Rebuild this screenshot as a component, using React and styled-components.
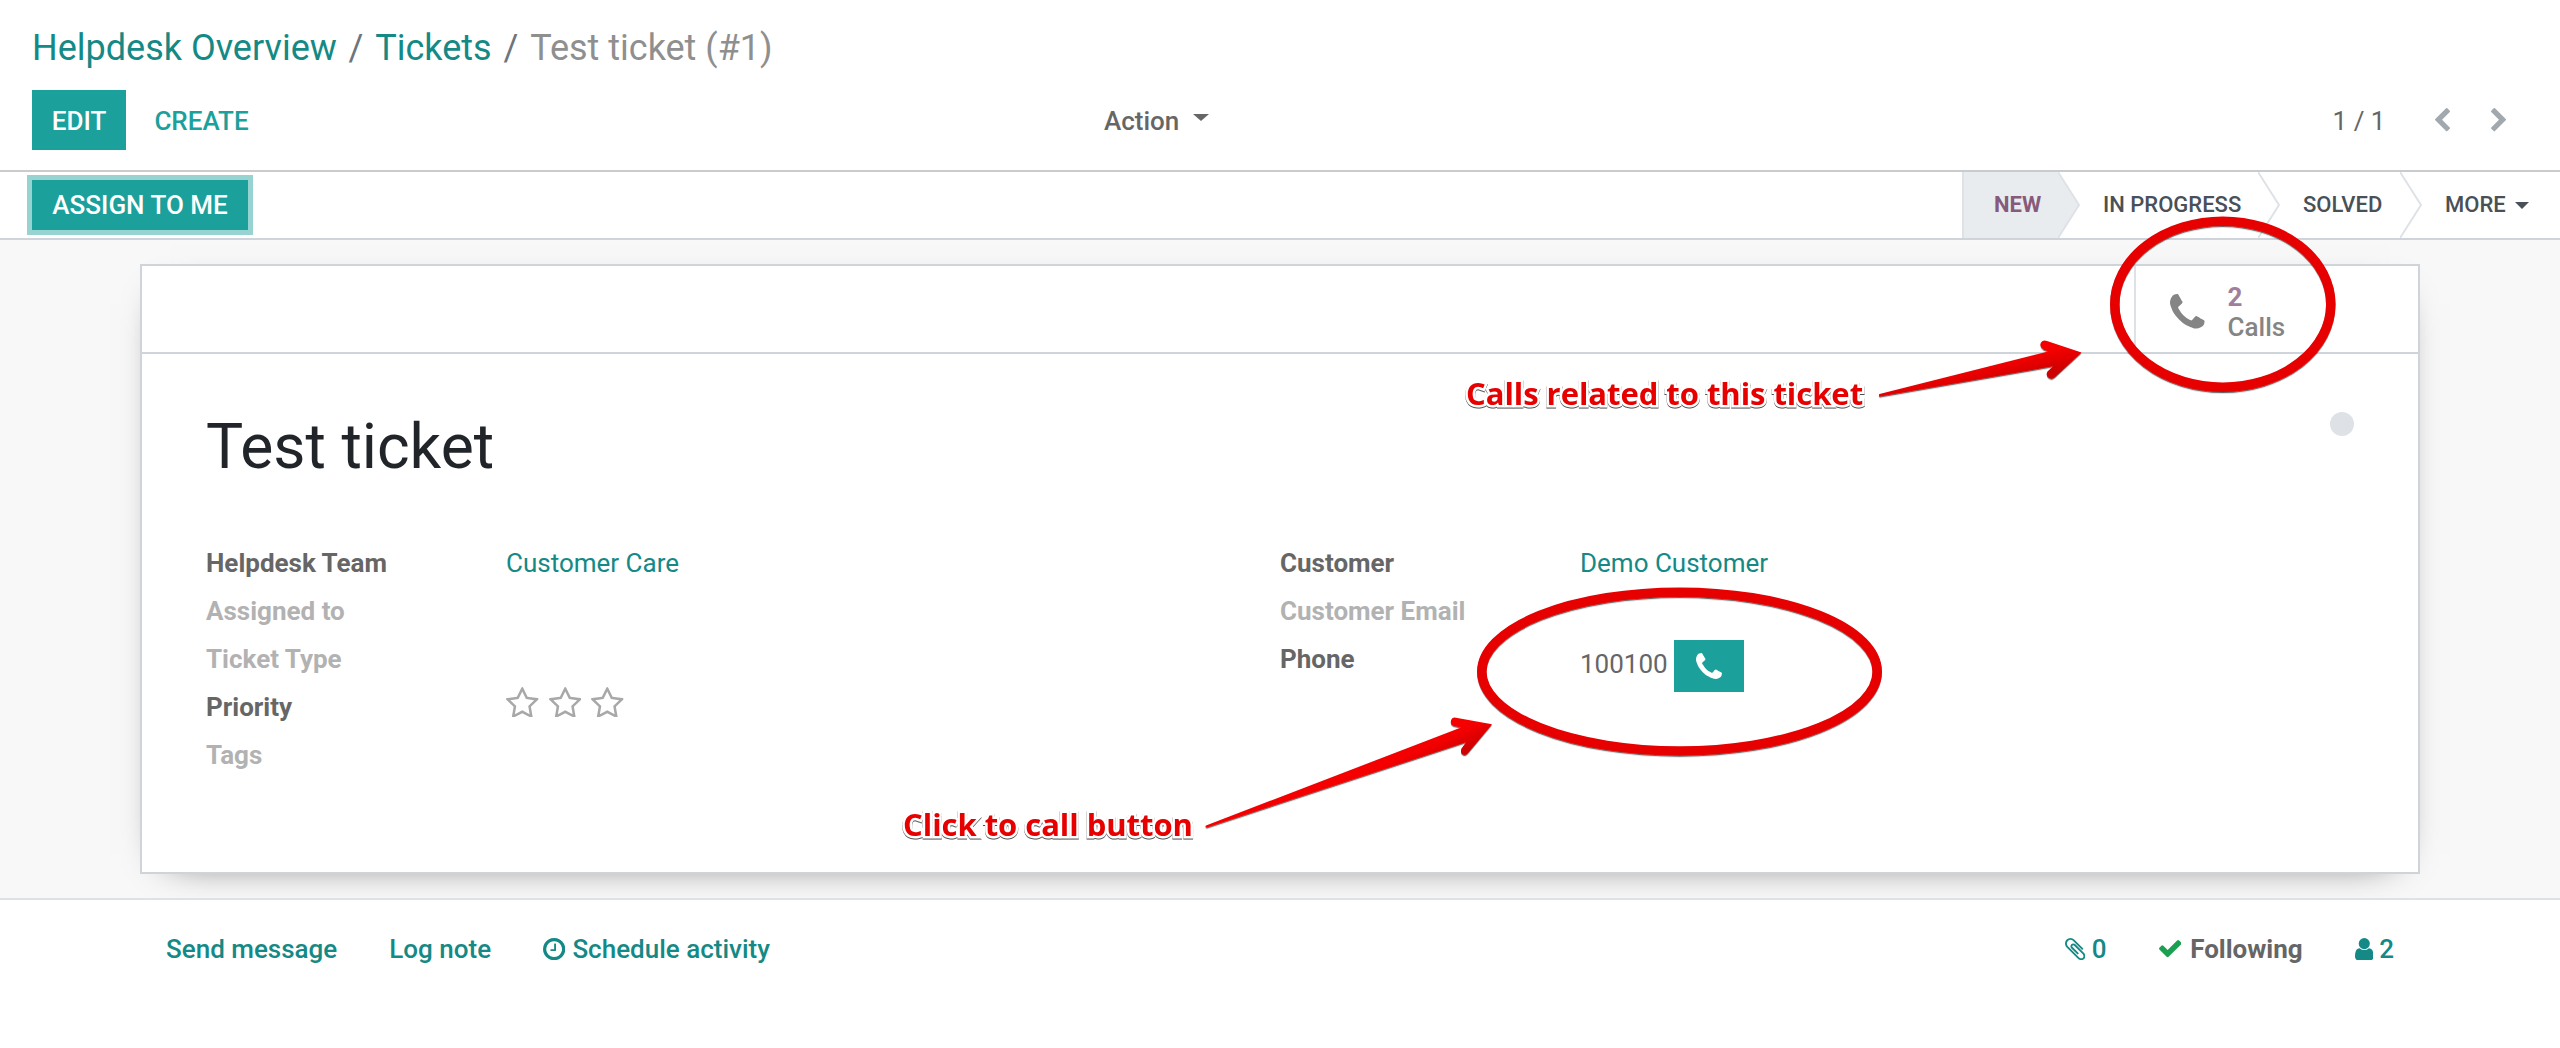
import React from "react";
import styled, { createGlobalStyle } from "styled-components";

const teal = "#1ba09c";
const link = "#148985";
const text = "#666666";
const rule = "#ced4da";

const GlobalStyle = createGlobalStyle`
  * { box-sizing: border-box; }
  body { margin: 0; background: #fff; }
`;

const Page = styled.div`
  position: relative;
  width: 2560px;
  height: 1048px;
  overflow: hidden;
  display: flex;
  flex-direction: column;
  background: #fff;
  color: ${text};
  font: 400 26px/40px Roboto, "Noto Sans", sans-serif;
`;

const ControlPanel = styled.header`
  height: 172px;
  padding: 22px 32px 0;
  border-bottom: 2px solid #c9cbcc;
`;

const Breadcrumb = styled.nav`
  display: flex;
  gap: 11.8px;
  height: 68px;
  font-size: 36px;
  line-height: 53px;
  color: #6c757d;
  white-space: nowrap;
`;

const Crumb = styled.span`
  color: ${(p) => (p.$current ? "#8f8f8f" : link)};
`;

const Controls = styled.div`
  display: grid;
  grid-template-columns: 1072px 1fr auto;
  align-items: center;
  height: 60px;
`;

const ButtonGroup = styled.div`
  display: flex;
`;

const Button = styled.button`
  width: ${(p) => p.$width}px;
  height: ${(p) => (p.$compact ? 50 : 60)}px;
  padding: ${(p) => (p.$compact ? 0 : 2)}px 0 0;
  border: 0;
  background: ${(p) => (p.$flat ? "transparent" : teal)};
  color: ${(p) => (p.$flat ? teal : "#fff")};
  box-shadow: ${(p) => (p.$focused ? "0 0 0 5px #97d3d1" : "none")};
  font: 500 26px/40px Roboto, sans-serif;
  text-transform: uppercase;
  white-space: nowrap;
`;

const Action = styled.div`
  display: flex;
  gap: 14px;
  padding-top: 2px;
  font-weight: 500;
`;

const Caret = styled.i`
  width: 0;
  height: 0;
  border: solid transparent;
  border-width: 7px ${(p) => p.$size}px 0;
  border-top-color: currentColor;
  margin-top: ${(p) => p.$top}px;
`;

const Pager = styled.div`
  display: flex;
  align-items: center;
  padding-right: 22px;
  color: #666;
`;

const PagerCount = styled.span`
  padding-top: 2px;
`;

const PagerArrows = styled.div`
  display: flex;
  gap: 40.5px;
  margin-left: 50px;
  color: #a1a8ae;
`;

const StatusBar = styled.div`
  display: flex;
  justify-content: space-between;
  align-items: center;
  height: 68px;
  padding-left: 32px;
  border-bottom: 2px solid ${rule};
`;

const Stages = styled.div`
  display: flex;
  height: 66px;
  padding-right: 32px;
  border-left: 2px solid #dee2e6;
  font-size: 22px;
  font-weight: 500;
  line-height: 66px;
  color: #495057;
  text-transform: uppercase;
  white-space: nowrap;
`;

const Stage = styled.div`
  display: flex;
  gap: 9px;
  width: ${(p) => p.$width}px;
  padding-left: ${(p) => (p.$active ? 30 : 23)}px;
  background: ${(p) => (p.$active ? "#e9ecef" : "transparent")};
  color: ${(p) => (p.$active ? "#875a7b" : "inherit")};
  font-weight: ${(p) => (p.$active ? 700 : 500)};
`;

const Body = styled.main`
  height: 660px;
  padding: 24px 140px 0;
  background: #f8f8f8;
  border-bottom: 2px solid #dee2e6;
  overflow: hidden;
`;

const Sheet = styled.section`
  height: 610px;
  border: 2px solid ${rule};
  background: #fff;
  box-shadow: 0 10px 40px -30px #000;
`;

const StatBar = styled.div`
  display: flex;
  justify-content: flex-end;
  height: 88px;
  border-bottom: 2px solid ${rule};
`;

const StatButton = styled.div`
  display: flex;
  align-items: center;
  width: 284px;
  padding: 5px 0 0 34px;
  border-left: 2px solid #dee2e6;
  color: #858585;
`;

const StatText = styled.div`
  display: flex;
  flex-direction: column;
  margin-left: 23px;
  font-weight: 500;
  line-height: 30px;
`;

const StatValue = styled.span`
  color: #a17f9b;
  font-weight: 700;
`;

const TitleRow = styled.div`
  display: flex;
  justify-content: space-between;
  padding: 51px 64px 0 64px;
  height: 184px;
`;

const Title = styled.h1`
  margin: 0;
  color: #212529;
  font-size: 62.4px;
  font-weight: 400;
  line-height: 84px;
`;

const KanbanState = styled.i`
  width: 24px;
  height: 24px;
  margin-top: 7px;
  border-radius: 50%;
  background: #dee2e6;
`;

const Fields = styled.div`
  display: grid;
  grid-template-columns: 1074px 1fr;
  padding-left: 64px;
`;

const Field = styled.div`
  display: grid;
  grid-template-columns: 300px 1fr;
  height: 48px;
`;

const Label = styled.label`
  font-weight: 700;
  line-height: 50px;
  color: ${(p) => (p.$empty ? "#b2b2b2" : text)};
`;

const FieldLink = styled.a`
  color: ${link};
  line-height: 50px;
`;

const Stars = styled.div`
  display: flex;
  align-items: center;
  gap: 10px;
  height: 40px;
  color: #a8a8a8;
`;

const PhoneValue = styled.div`
  display: flex;
  gap: 6px;
  height: 58px;
  line-height: 60px;
`;

const CallButton = styled.button`
  display: flex;
  align-items: center;
  justify-content: center;
  width: 70px;
  height: 52px;
  margin-top: 6px;
  padding: 0;
  border: 0;
  background: ${teal};
  color: #fff;
`;

const Chatter = styled.footer`
  display: flex;
  justify-content: space-between;
  padding: 29px 166px 0;
  color: ${link};
  font-weight: 500;
`;

const ChatterGroup = styled.div`
  display: flex;
  gap: ${(p) => p.$gap}px;
`;

const ChatterItem = styled.span`
  display: flex;
  align-items: center;
  gap: ${(p) => p.$gap || 7}px;
  color: ${(p) => (p.$muted ? text : "inherit")};
  font-weight: ${(p) => (p.$bold ? 700 : 500)};
  white-space: nowrap;
`;

const Svg = styled.svg`
  display: block;
  flex: none;
  width: ${(p) => p.$w}px;
  height: ${(p) => p.$h}px;
  fill: ${(p) => p.$color || "currentColor"};
`;

const Markup = styled.svg`
  position: absolute;
  left: 0;
  top: 0;
  width: 2560px;
  height: 1048px;
  pointer-events: none;
`;

const Note = styled.span`
  position: absolute;
  left: ${(p) => p.$x}px;
  top: ${(p) => p.$y}px;
  color: #e60000;
  font: 700 31px/44px "Open Sans", "Noto Sans", sans-serif;
  letter-spacing: -0.04px;
  white-space: nowrap;
  -webkit-text-stroke: 5px #fff;
  paint-order: stroke fill;
  filter: drop-shadow(0 1.5px 0.7px rgba(0, 0, 0, 0.7));
`;

const glyphs = {
  phone: {
    box: [192, 128, 1408, 1408],
    d: "M1600 1240q0 27-10 70.5t-21 68.5q-21 50-122 106-94 51-186 51-27 0-53-3.5t-57.5-12.5-47-14.5-55.5-20.5-49-18q-98-35-175-83-127-79-264-216t-216-264q-48-77-83-175-3-9-18-49t-20.5-55.5-14.5-47-12.5-57.5-3.5-53q0-92 51-186 56-101 106-122 25-11 68.5-21t70.5-10q14 0 21 3 18 6 53 76 11 19 30 54t35 63.5 31 53.5q3 4 17.5 25t21.5 35.5 7 28.5q0 20-28.5 50t-62 55-62 53-28.5 46q0 9 5 22.5t8.5 20.5 14 24 11.5 19q76 137 174 235t235 174q2 1 19 11.5t24 14 20.5 8.5 22.5 5q18 0 46-28.5t53-62 55-62 50-28.5q14 0 28.5 7t35.5 21.5 25 17.5q25 15 53.5 31t63.5 35 54 30q70 35 76 53 3 7 3 21z",
  },
  star: {
    box: [64, 32, 1664, 1587],
    d: "M1201 1004l306-297-422-62-189-382-189 382-422 62 306 297-73 421 378-199 377 199zm527-357q0 22-26 48l-363 354 86 500q1 7 1 20 0 50-41 50-19 0-40-12l-449-236-449 236q-22 12-40 12-21 0-31.5-14.5t-10.5-35.5q0-6 2-20l86-500-364-354q-25-27-25-48 0-37 56-46l502-73 225-455q19-41 49-41t49 41l225 455 502 73q56 9 56 46z",
  },
  clock: {
    box: [128, 128, 1536, 1536],
    d: "M1024 544v448q0 14-9 23t-23 9h-320q-14 0-23-9t-9-23v-64q0-14 9-23t23-9h224v-352q0-14 9-23t23-9h64q14 0 23 9t9 23zm416 352q0-148-73-273t-198-198-273-73-273 73-198 198-73 273 73 273 198 198 273 73 273-73 198-198 73-273zm224 0q0 209-103 385.5t-279.5 279.5-385.5 103-385.5-103-279.5-279.5-103-385.5 103-385.5 279.5-279.5 385.5-103 385.5 103 279.5 279.5 103 385.5z",
  },
  clip: {
    box: [196, 132, 1400, 1528],
    d: "M1596 1385q0 117-79 196t-196 79q-135 0-235-100l-777-776q-113-115-113-271 0-159 110-270t269-111q158 0 273 113l605 606q10 10 10 22 0 16-30.5 46.5t-46.5 30.5q-13 0-23-10l-606-607q-79-77-181-77-106 0-179 75t-73 181q0 105 76 181l776 777q63 63 145 63 64 0 106-42t42-106q0-82-63-145l-581-581q-26-24-60-24-29 0-48 19t-19 48q0 32 25 59l410 410q10 10 10 22 0 16-31 47t-47 31q-12 0-22-10l-410-410q-63-61-63-149 0-82 57-139t139-57q88 0 149 63l581 581q100 98 100 235z",
  },
  check: {
    box: [121, 334, 1550, 1188],
    d: "M1671 566q0 40-28 68l-724 724-136 136q-28 28-68 28t-68-28l-136-136-362-362q-28-28-28-68t28-68l136-136q28-28 68-28t68 28l294 295 656-657q28-28 68-28t68 28l136 136q28 28 28 68z",
  },
  user: {
    box: [256, 128, 1280, 1536],
    d: "M1536 1399q0 109-62.5 187t-150.5 78h-854q-88 0-150.5-78t-62.5-187q0-85 8.5-160.5t31.5-152 58.5-131 94-89 134.5-34.5q131 128 313 128t313-128q76 0 134.5 34.5t94 89 58.5 131 31.5 152 8.5 160.5zm-256-887q0 159-112.5 271.5t-271.5 112.5-271.5-112.5-112.5-271.5 112.5-271.5 271.5-112.5 271.5 112.5 112.5 271.5z",
  },
  left: {
    box: [410, 26, 1036, 1612],
    d: "M1427 301l-531 531 531 531q19 19 19 45t-19 45l-166 166q-19 19-45 19t-45-19l-742-742q-19-19-19-45t19-45l742-742q19-19 45-19t45 19l166 166q19 19 19 45t-19 45z",
  },
  right: {
    box: [346, 26, 1036, 1612],
    d: "M1363 877l-742 742q-19 19-45 19t-45-19l-166-166q-19-19-19-45t19-45l531-531-531-531q-19-19-19-45t19-45l166-166q19-19 45-19t45 19l742 742q19 19 19 45t-19 45z",
  },
};

function Icon({ name, size, color }) {
  const { box, d } = glyphs[name];
  return (
    <Svg
      $w={(box[2] * size) / 1792}
      $h={(box[3] * size) / 1792}
      $color={color}
      viewBox={box.join(" ")}
      aria-hidden="true"
    >
      <path d={d} />
    </Svg>
  );
}

function StageArrow({ filled }) {
  return (
    <Svg $w={22} $h={66} $color={filled ? "#e9ecef" : "none"} viewBox="0 0 22 66">
      <path d="M0 0L21 33L0 66" stroke="#dee2e6" strokeWidth="2" />
    </Svg>
  );
}

function Markups() {
  return (
    <Markup viewBox="0 0 2560 1048">
      <defs>
        <linearGradient id="red1" gradientUnits="userSpaceOnUse" x1="2030" y1="350" x2="2035" y2="374">
          <stop offset="0.2" stopColor="#f40000" />
          <stop offset="1" stopColor="#cf0000" />
        </linearGradient>
        <linearGradient id="red2" gradientUnits="userSpaceOnUse" x1="1440" y1="735" x2="1450" y2="757">
          <stop offset="0.2" stopColor="#f40000" />
          <stop offset="1" stopColor="#cf0000" />
        </linearGradient>
        <filter id="drop" x="-5%" y="-10%" width="110%" height="125%">
          <feDropShadow dx="0" dy="1.2" stdDeviation="0.7" floodColor="#000" floodOpacity="0.6" />
        </filter>
      </defs>
      <g filter="url(#drop)" fill="none" stroke="#e60000" strokeWidth="9.5">
        <ellipse cx="2222.8" cy="304.2" rx="108" ry="83" />
        <ellipse cx="1679.5" cy="671.6" rx="197.7" ry="79.4" />
      </g>
      <g filter="url(#drop)">
        <path
          fill="url(#red1)"
          d="M1879.5 394 L2048 351.5 L2043.500 349.500 Q2039 346.500 2041 342.500 Q2043 339.500 2047 341 L2081.500 352.500 L2055 377 Q2051.500 380 2048.500 377.500 Q2045.500 375 2047.500 371.500 L2053 366.300 L1880 396.500 Q1878 395.500 1879.500 394 Z"
        />
        <path
          fill="url(#red2)"
          d="M1206 825.500 L1461 727.500 L1454 726 Q1450 724.500 1451 720.500 Q1452 717 1456 717.700 L1492 724.300 L1468 753 Q1465.500 756 1462.500 754.300 Q1460 752.500 1461.500 748.500 L1466 742.300 L1207 827.500 Q1204.500 827.300 1206 825.500 Z"
        />
      </g>
    </Markup>
  );
}

export default function App() {
  return (
    <Page>
      <GlobalStyle />
      <ControlPanel>
        <Breadcrumb>
          <Crumb>Helpdesk Overview</Crumb>
          <span>/</span>
          <Crumb>Tickets</Crumb>
          <span>/</span>
          <Crumb $current>Test ticket (#1)</Crumb>
        </Breadcrumb>
        <Controls>
          <ButtonGroup>
            <Button $width={94}>Edit</Button>
            <Button $width={151} $flat>Create</Button>
          </ButtonGroup>
          <Action>
            Action <Caret $size={8} $top={13} />
          </Action>
          <Pager>
            <PagerCount>1 / 1</PagerCount>
            <PagerArrows>
              <Icon name="left" size={26} />
              <Icon name="right" size={26} />
            </PagerArrows>
          </Pager>
        </Controls>
      </ControlPanel>
      <StatusBar>
        <Button $width={216} $compact $focused>Assign to me</Button>
        <Stages>
          <Stage $active $width={94}>New</Stage>
          <StageArrow filled />
          <Stage $width={178}>In Progress</Stage>
          <StageArrow />
          <Stage $width={120}>Solved</Stage>
          <StageArrow />
          <Stage $width={106}>
            More <Caret $size={7} $top={30} />
          </Stage>
        </Stages>
      </StatusBar>
      <Body>
        <Sheet>
          <StatBar>
            <StatButton>
              <Icon name="phone" size={44} />
              <StatText>
                <StatValue>2</StatValue>
                <span>Calls</span>
              </StatText>
            </StatButton>
          </StatBar>
          <TitleRow>
            <Title>Test ticket</Title>
            <KanbanState />
          </TitleRow>
          <Fields>
            <div>
              <Field>
                <Label>Helpdesk Team</Label>
                <FieldLink>Customer Care</FieldLink>
              </Field>
              <Field><Label $empty>Assigned to</Label></Field>
              <Field><Label $empty>Ticket Type</Label></Field>
              <Field>
                <Label>Priority</Label>
                <Stars>
                  <Icon name="star" size={35} />
                  <Icon name="star" size={35} />
                  <Icon name="star" size={35} />
                </Stars>
              </Field>
              <Field><Label $empty>Tags</Label></Field>
            </div>
            <div>
              <Field>
                <Label>Customer</Label>
                <FieldLink>Demo Customer</FieldLink>
              </Field>
              <Field><Label $empty>Customer Email</Label></Field>
              <Field>
                <Label>Phone</Label>
                <PhoneValue>
                  100100
                  <CallButton><Icon name="phone" size={33} /></CallButton>
                </PhoneValue>
              </Field>
            </div>
          </Fields>
        </Sheet>
      </Body>
      <Chatter>
        <ChatterGroup $gap={52}>
          <ChatterItem>Send message</ChatterItem>
          <ChatterItem>Log note</ChatterItem>
          <ChatterItem><Icon name="clock" size={26} />Schedule activity</ChatterItem>
        </ChatterGroup>
        <ChatterGroup $gap={52}>
          <ChatterItem><Icon name="clip" size={26} />0</ChatterItem>
          <ChatterItem $muted $bold $gap={9}>
            <Icon name="check" size={26} color="#1aa050" />Following
          </ChatterItem>
          <ChatterItem $gap={6}><Icon name="user" size={26} />2</ChatterItem>
        </ChatterGroup>
      </Chatter>
      <Markups />
      <Note $x={1466} $y={371}>Calls related to this ticket</Note>
      <Note $x={903} $y={802}>Click to call button</Note>
    </Page>
  );
}
